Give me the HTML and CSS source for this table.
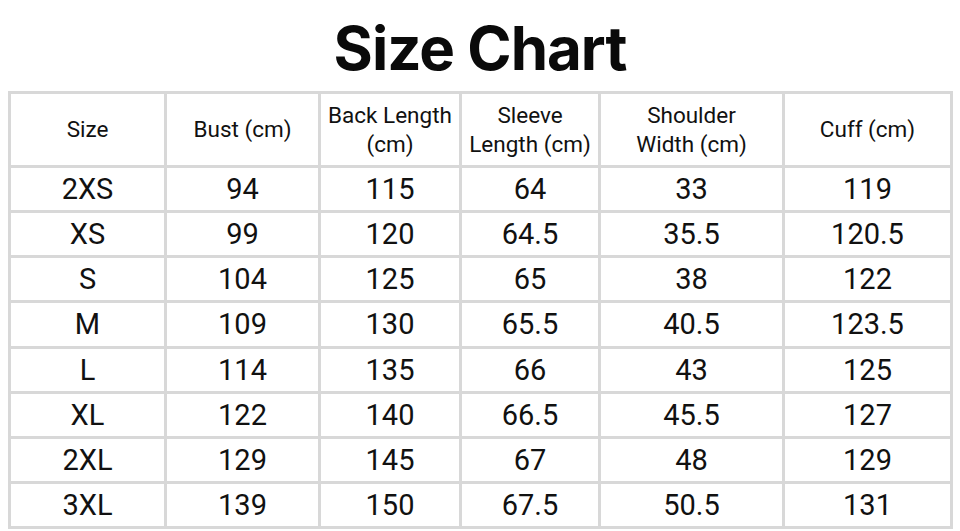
FILE: index.html
```html
<!DOCTYPE html>
<html>
<head>
<meta charset="utf-8">
<link rel="stylesheet" href="styles.css">
</head>
<body>
<h1 class="title">Size Chart</h1>
<div class="chart">
  <div class="cell head">Size</div>
  <div class="cell head">Bust (cm)</div>
  <div class="cell head">Back Length<br>(cm)</div>
  <div class="cell head">Sleeve<br>Length (cm)</div>
  <div class="cell head">Shoulder<br>Width (cm)</div>
  <div class="cell head">Cuff (cm)</div>

  <div class="cell">2XS</div><div class="cell">94</div><div class="cell">115</div><div class="cell">64</div><div class="cell">33</div><div class="cell">119</div>
  <div class="cell">XS</div><div class="cell">99</div><div class="cell">120</div><div class="cell">64.5</div><div class="cell">35.5</div><div class="cell">120.5</div>
  <div class="cell">S</div><div class="cell">104</div><div class="cell">125</div><div class="cell">65</div><div class="cell">38</div><div class="cell">122</div>
  <div class="cell">M</div><div class="cell">109</div><div class="cell">130</div><div class="cell">65.5</div><div class="cell">40.5</div><div class="cell">123.5</div>
  <div class="cell">L</div><div class="cell">114</div><div class="cell">135</div><div class="cell">66</div><div class="cell">43</div><div class="cell">125</div>
  <div class="cell">XL</div><div class="cell">122</div><div class="cell">140</div><div class="cell">66.5</div><div class="cell">45.5</div><div class="cell">127</div>
  <div class="cell">2XL</div><div class="cell">129</div><div class="cell">145</div><div class="cell">67</div><div class="cell">48</div><div class="cell">129</div>
  <div class="cell">3XL</div><div class="cell">139</div><div class="cell">150</div><div class="cell">67.5</div><div class="cell">50.5</div><div class="cell">131</div>
</div>
</body>
</html>
```
FILE: styles.css
```css
html, body {
  margin: 0;
  padding: 0;
  background: #ffffff;
  overflow: hidden;
}
body {
  width: 960px;
  height: 531px;
}
.title {
  margin: 0;
  height: 91px;
  box-sizing: border-box;
  padding-top: 18px;
  font-family: Inter, "Noto Sans", sans-serif;
  font-weight: 700;
  font-size: 60px;
  line-height: 60px;
  letter-spacing: -1px;
  text-align: center;
  color: #0a0a0a;
}
.chart {
  margin-left: 8px;
  width: 945px;
  display: grid;
  grid-template-columns: 153px 151px 138px 136px 181px 165px;
  grid-template-rows: 71px repeat(8, 42.15px);
  gap: 3px;
  padding: 3px;
  box-sizing: border-box;
  background: #d8d8d8;
}
.cell {
  background: #ffffff;
  display: flex;
  align-items: center;
  justify-content: center;
  text-align: center;
  font-family: Roboto, "Liberation Sans", sans-serif;
  font-size: 29px;
  color: #111111;
}
.head {
  font-size: 22.5px;
  line-height: 28.5px;
}
```
